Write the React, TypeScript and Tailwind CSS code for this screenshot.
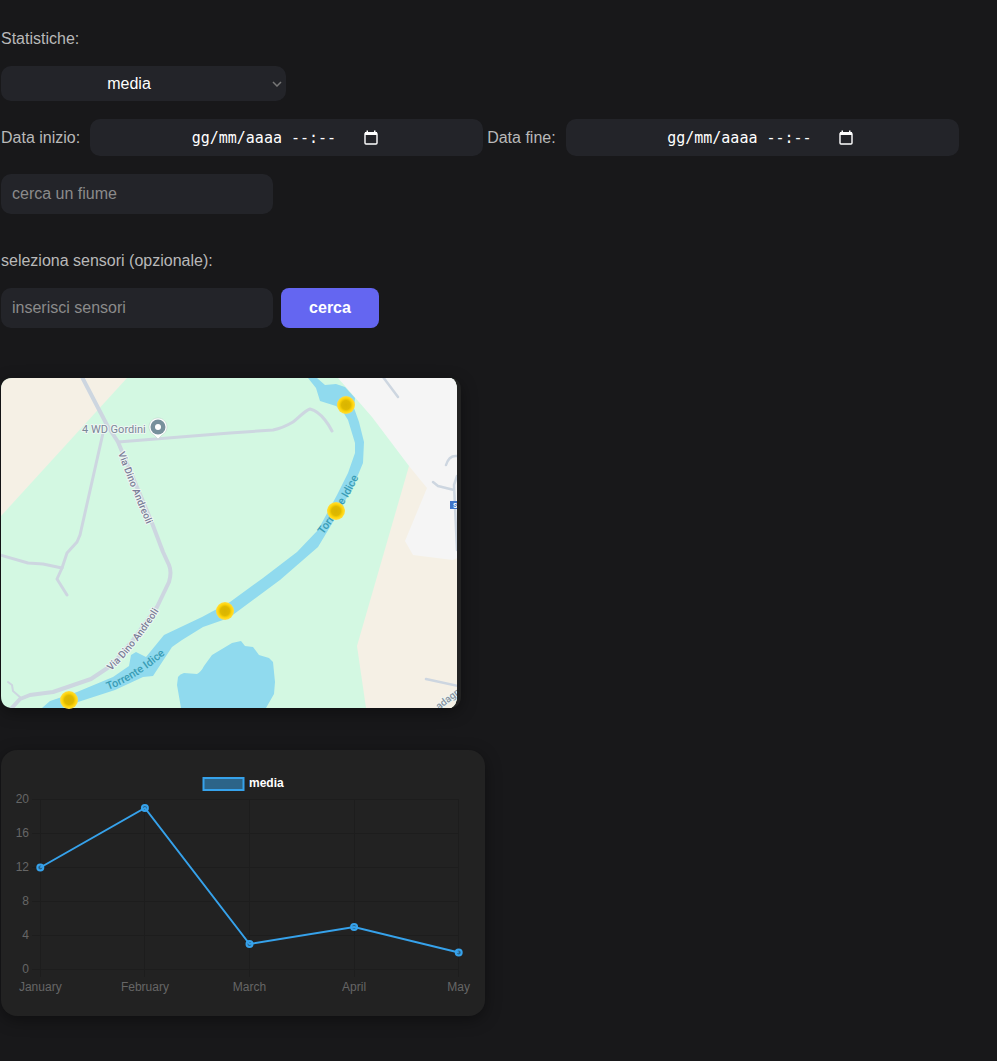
import React, { useState } from "react";

const ROAD = "#cdd6e0";
const WATER = "#90daee";

const markers = [
  { x: 345, y: 27 },
  { x: 335, y: 133 },
  { x: 224, y: 233 },
  { x: 68, y: 322 },
];

function RiverMap() {
  return (
    <svg viewBox="0 0 460 330" className="block h-auto w-full overflow-visible" role="img" aria-label="Torrente Idice">
      <defs>
        <clipPath id="map-clip">
          <path d="M12 0H450Q456 2 456 12V318Q456 327 450 330H12Q0 330 0 318V12Q0 0 12 0Z" />
        </clipPath>
        <radialGradient id="sensor">
          <stop offset="0" stopColor="#d9b400" />
          <stop offset="0.5" stopColor="#dfb900" />
          <stop offset="0.75" stopColor="#ffd60a" />
          <stop offset="1" stopColor="#ffdd45" />
        </radialGradient>
        <path id="idice-upper" d="M322 157Q345 127 362 90" />
        <path id="idice-lower" d="M107 312Q140 300 174 267" />
        <path id="andreoli-upper" d="M117 75Q129 108 148 152" />
        <path id="andreoli-lower" d="M110 293Q138 266 162 226" />
      </defs>
      <path d="M440 0H448Q460 0 460 12V318Q460 330 448 330H440Z" fill="#222222" />
      <g clipPath="url(#map-clip)">
        <rect width="456" height="330" fill="#d3f8e2" />
        <path d="M0 0H126L0 138Z" fill="#f5f0e5" />
        <path d="M408 88L456 110V330H365L356 268Z" fill="#f5f0e5" />
        <path d="M337 0L371 39L408 88L426 110L404 163L412 177L452 182L456 180V0Z" fill="#f5f5f5" />
        <path
          d="M307 0L315 10L319 23L335 28L342 34L347 42L354 65V75L347 95L336 117L317 152L296 174L262 200L229 224L201 239L163 257L145 279L135 274L130 277L128 288L112 299L76 314L49 323L41 330H62L77 324L114 312L142 299L152 298L171 269L181 262L202 249L222 242L229 239L279 202L317 169L329 149L352 109L362 85L363 64L358 44L353 30L354 20L344 9L335 6L324 7L316 0Z"
          fill={WATER}
        />
        <path
          d="M180 330L176 307L177 299Q179 296 183 295L196 296Q200 294 203 288L211 277L231 265L240 263L244 268L252 269L258 277L268 280L272 284L274 304L273 316L265 330Z"
          fill={WATER}
        />
        <g fill="none" stroke={ROAD} strokeLinecap="round" strokeLinejoin="round">
          <path d="M81 -1L106 47L117 64L151 145L162 174L168 187Q171 194 168 204L156 229L132 262L111 287L90 301L52 314L29 317L19 321L9 332" strokeWidth="4" />
          <path d="M102 55L79 157L76 164L66 175L61 190L56 201L66 217" strokeWidth="3" />
          <path d="M-1 177L27 185L42 186L61 190" strokeWidth="3" />
          <path d="M117 64L229 55L272 52Q282 50 292 44C299 39 303 33 309 31Q317 33 324 42Q328 47 331 53" strokeWidth="3" />
          <path d="M7 304L11 307L12 313L20 320" strokeWidth="2" />
          <path d="M382 -1L397 19M445 87Q448 77 456 78M432 104L437 108L453 112M456 98L453 107L456 172M425 301L457 308" strokeWidth="2.5" />
        </g>
        <g className="font-[Roboto,sans-serif]" stroke="#eef6f3" strokeWidth="2" paintOrder="stroke" strokeLinejoin="round">
          <text x="81" y="55" fontSize="11" fill="#7a8797">4 WD Gordini</text>
          <text fontSize="10" fontWeight="500" fill="#7b7f98">
            <textPath href="#andreoli-upper">Via Dino Andreoli</textPath>
          </text>
          <text fontSize="10" fontWeight="500" fill="#7b7f98">
            <textPath href="#andreoli-lower">Via Dino Andreoli</textPath>
          </text>
          <text x="0" y="0" fontSize="10" fontWeight="500" fill="#8793a0" transform="translate(438 332) rotate(-38)">adagno</text>
        </g>
        <g className="font-[Roboto,sans-serif]" fontSize="11" fontWeight="500" fill="#3a9db5">
          <text><textPath href="#idice-upper">Torrente Idice</textPath></text>
          <text><textPath href="#idice-lower">Torrente Idice</textPath></text>
        </g>
        <rect x="449" y="123" width="10" height="8" fill="#3f74c8" />
        <text x="452" y="130" fontSize="7" fontWeight="700" fill="#ffffff" className="font-[Roboto,sans-serif]">S</text>
        <path d="M157 61L153 57A9 9 0 1 1 161 57Z" fill="#ffffff" stroke="#b7cdc5" strokeWidth="0.5" />
        <circle cx="157" cy="49" r="7.5" fill="#78909c" />
        <circle cx="157" cy="49" r="3" fill="#ffffff" />
      </g>
      {markers.map((m) => (
        <circle key={m.x} cx={m.x} cy={m.y} r="9" fill="url(#sensor)" />
      ))}
    </svg>
  );
}

const series = [
  { month: "January", value: 12 },
  { month: "February", value: 19 },
  { month: "March", value: 3 },
  { month: "April", value: 5 },
  { month: "May", value: 2 },
];
const ticks = [0, 4, 8, 12, 16, 20];
const px = (i: number) => 39.3 + i * 104.6;
const py = (v: number) => 219.5 - v * 8.5;

function StatsChart() {
  return (
    <svg viewBox="0 0 484 266" className="block h-auto w-full font-['Liberation_Sans',Arial,sans-serif]" role="img" aria-label="media">
      <g stroke="#1d1d1d" strokeWidth="1">
        {ticks.map((t) => (
          <line key={t} x1="31" x2="458" y1={Math.floor(py(t)) + 0.5} y2={Math.floor(py(t)) + 0.5} />
        ))}
        {series.map((s, i) => (
          <line key={s.month} x1={Math.floor(px(i)) + 0.5} x2={Math.floor(px(i)) + 0.5} y1="50" y2="227" />
        ))}
      </g>
      <rect x="202.5" y="28" width="40" height="12" fill="#2c6488" stroke="#36a2eb" strokeWidth="2" />
      <text x="248" y="37" fontSize="12" fontWeight="700" fill="#ffffff">media</text>
      <g fontSize="12" fill="#666666">
        {ticks.map((t) => (
          <text key={t} x="28" y={py(t) + 3.5} textAnchor="end">{t}</text>
        ))}
        {series.map((s, i) => (
          <text key={s.month} x={px(i)} y="241" textAnchor="middle">{s.month}</text>
        ))}
      </g>
      <polyline points={series.map((s, i) => `${px(i)},${py(s.value)}`).join(" ")} fill="none" stroke="#36a2eb" strokeWidth="2" />
      {series.map((s, i) => (
        <circle key={s.month} cx={px(i)} cy={py(s.value)} r="3" fill="#36a2eb" fillOpacity="0.5" stroke="#36a2eb" strokeWidth="2" />
      ))}
    </svg>
  );
}

function DateField({ id, label }: { id: string; label: string }) {
  return (
    <div className="flex max-w-full items-center gap-[10px]">
      <label htmlFor={id} className="shrink-0">{label}</label>
      <div className="flex h-[37px] w-[393px] min-w-0 items-center justify-center gap-5 rounded-[10px] bg-[#232429] pr-1">
        <input
          id={id}
          type="text"
          placeholder="gg/mm/aaaa --:--"
          className="w-[152px] min-w-0 bg-transparent pt-0.5 font-['DejaVu_Sans_Mono',monospace] text-[15px] text-white outline-none placeholder:text-white"
        />
        <button type="button" aria-label={`Apri calendario ${label}`}>
          <svg width="14" height="16" viewBox="0 0 14 16" className="block" fill="none">
            <rect x="1" y="3" width="12" height="11" rx="1" stroke="#ffffff" strokeWidth="1.4" />
            <path d="M1 2H13V5H1ZM2.5 0.5H4V3H2.5ZM10 0.5H11.5V3H10Z" fill="#ffffff" />
          </svg>
        </button>
      </div>
    </div>
  );
}

const fieldClass =
  "h-10 w-[272px] max-w-full rounded-[10px] bg-[#232429] px-[11px] text-base text-white outline-none placeholder:text-[#8b8b8b]";

export default function App() {
  const [stat, setStat] = useState("media");
  return (
    <main className="min-h-screen bg-[#18181a] pt-[27px] pb-11 pl-px font-['Liberation_Sans',Arial,sans-serif] text-base text-[#b9b9b9]">
      <form onSubmit={(e) => e.preventDefault()}>
        <label htmlFor="stat" className="block">Statistiche:</label>
        <div className="relative mt-[15px] w-[285px] max-w-full">
          <select
            id="stat"
            value={stat}
            onChange={(e) => setStat(e.target.value)}
            className="block h-[35px] w-full appearance-none rounded-[10px] bg-[#232429] pr-[29px] text-center text-base text-white outline-none [text-align-last:center]"
          >
            <option>media</option>
            <option>massimo</option>
            <option>minimo</option>
          </select>
          <svg width="10" height="6" viewBox="0 0 10 6" className="pointer-events-none absolute top-[15px] right-1" fill="none">
            <path d="M1 1L5 5L9 1" stroke="#777777" strokeWidth="1.5" />
          </svg>
        </div>
        <div className="mt-[18px] flex flex-wrap items-center gap-x-1 gap-y-3">
          <DateField id="start" label="Data inizio:" />
          <DateField id="end" label="Data fine:" />
        </div>
        <input aria-label="cerca un fiume" placeholder="cerca un fiume" className={`mt-[18px] block ${fieldClass}`} />
        <label htmlFor="sensors" className="mt-[35px] block">seleziona sensori (opzionale):</label>
        <div className="mt-[15px] flex flex-wrap gap-2">
          <input id="sensors" placeholder="inserisci sensori" className={fieldClass} />
          <button type="submit" className="h-10 w-[98px] rounded-lg bg-[#6466f1] font-bold text-white">cerca</button>
        </div>
      </form>
      <section className="mt-[50px] w-[460px] max-w-full rounded-xl shadow-[0_4px_16px_rgba(0,0,0,0.4)]">
        <RiverMap />
      </section>
      <section className="mt-[42px] w-[484px] max-w-full rounded-2xl bg-[#222222] shadow-[0_4px_16px_rgba(0,0,0,0.4)]">
        <StatsChart />
      </section>
    </main>
  );
}
